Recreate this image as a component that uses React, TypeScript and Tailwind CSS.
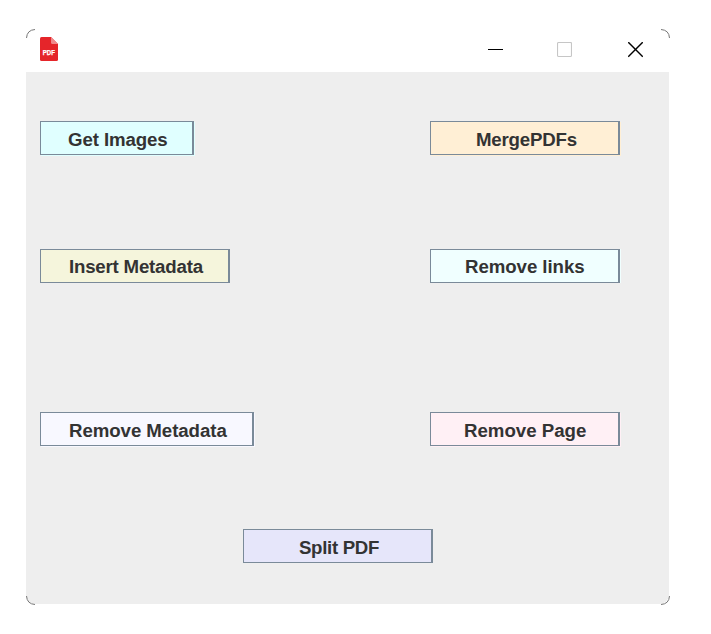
type ActionButtonProps = { label: string; className: string };

function ActionButton({ label, className }: ActionButtonProps) {
  return (
    <button
      className={`flex h-[34px] items-center whitespace-nowrap border border-r-2 border-[#7a8a99] text-[18.67px] leading-none font-bold text-[#333333] ${className}`}
    >
      {label}
    </button>
  );
}

function PdfIcon() {
  return (
    <svg className="h-6 w-[18px]" viewBox="0 0 18 24" aria-hidden="true">
      <path d="M1.5 0H11L18 7V22.5Q18 24 16.5 24H1.5Q0 24 0 22.5V1.5Q0 0 1.5 0Z" fill="#e5252a" />
      <path d="M11 0L18 7H12.5Q11 7 11 5.5Z" fill="#f0898b" />
      <text x="2.8" y="18" fill="#fff" stroke="#fff" strokeWidth=".25" fontSize="6.6" fontWeight="700" textLength="12" lengthAdjust="spacingAndGlyphs">
        PDF
      </text>
    </svg>
  );
}

export default function App() {
  return (
    <div className="h-[634px] w-[711px] overflow-hidden bg-white pt-[29px] pl-[26px] font-['Liberation_Sans',Arial,sans-serif]">
      <div className="relative h-[576px] w-[644px]">
        <header className="flex h-[43px] justify-between bg-white pt-2 pl-[14px]">
          <PdfIcon />
          <div className="flex gap-[54px] pr-[27px] pt-[5px]">
            <svg className="h-4 w-[15px]" viewBox="0 0 15 16" aria-label="Minimize">
              <path d="M0 7.5H15" stroke="#000" />
            </svg>
            <svg className="h-4 w-[15px]" viewBox="0 0 15 16" aria-label="Maximize">
              <rect x=".5" y=".5" width="14" height="14" rx="1" fill="none" stroke="#c6c6c6" strokeWidth="1.15" />
            </svg>
            <svg className="ml-[2px] h-4 w-[15px]" viewBox="0 0 15 16" aria-label="Close">
              <path d="M0.2 0.2L14.8 14.8M14.8 0.2L0.2 14.8" stroke="#000" strokeWidth="1.5" />
            </svg>
          </div>
        </header>
        <main className="h-[532px] w-[643px] rounded-b-[9px] bg-[#eeeeee] pt-[49px] pl-[14px]">
          <div className="grid grid-cols-[390px_190px]">
            <div className="h-32">
              <ActionButton label="Get Images" className="w-[154px] bg-[#e0ffff] pt-[5px] pl-[27px] tracking-[-0.1px] shadow-[1px_1px_0_#e0ffff]" />
            </div>
            <div className="h-32">
              <ActionButton label="MergePDFs" className="w-[190px] bg-[#ffefd5] pt-[5px] pl-[45px] tracking-[-0.2px] shadow-[1px_1px_0_#ffefd5]" />
            </div>
            <div className="h-[163px]">
              <ActionButton label="Insert Metadata" className="w-[190px] bg-[#f5f5dc] pt-[3px] pl-[28px] tracking-[-0.2px]" />
            </div>
            <div className="h-[163px]">
              <ActionButton label="Remove links" className="w-[190px] bg-[#f0ffff] pt-[3px] pl-[34px] tracking-[-0.06px] shadow-[1px_0_0_#f0ffff]" />
            </div>
            <div className="h-[117px]">
              <ActionButton label="Remove Metadata" className="w-[214px] bg-[#f8f8ff] pt-[5px] pl-[28px] tracking-[-0.06px] shadow-[1px_1px_0_#f8f8ff]" />
            </div>
            <div className="h-[117px]">
              <ActionButton label="Remove Page" className="w-[190px] bg-[#fff0f5] pt-[5px] pl-[33px] shadow-[1px_1px_0_#fff0f5]" />
            </div>
          </div>
          <ActionButton label="Split PDF" className="ml-[203px] w-[190px] bg-[#e6e6fa] pt-[5px] pl-[55px] tracking-[-0.32px]" />
        </main>
        <svg className="pointer-events-none absolute inset-0 h-[576px] w-[644px]" viewBox="0 0 644 576" fill="none" stroke="#777" aria-hidden="true">
          <path d="M.5 9Q1 1 9 .5M635 .5Q643 1 643.5 9M.5 567Q1 575 9 575.5M635 575.5Q643 575 643.5 567" />
        </svg>
      </div>
    </div>
  );
}
